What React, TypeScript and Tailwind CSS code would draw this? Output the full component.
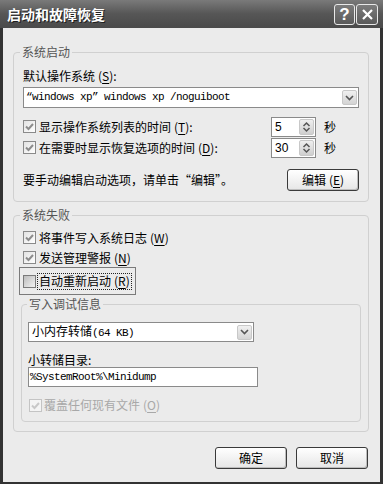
import React from "react";

const cjk = "font-['Noto_Sans_CJK_SC','Liberation_Sans',sans-serif]";
const mono = "font-['Liberation_Mono','Noto_Sans_CJK_SC',monospace]";

const Mn = ({ c }: { c: string }) => (
  <span className="ml-[3px]">
    (<span className="underline underline-offset-2">{c}</span>)
  </span>
);

const Check = ({ checked, disabled, hot }: { checked?: boolean; disabled?: boolean; hot?: boolean }) => (
  <span
    className={`flex h-[13px] w-[13px] shrink-0 items-center justify-center border ${
      disabled
        ? "border-[#c4c4c4] bg-[#f4f4f4]"
        : hot
        ? "border-[#7a7a7a] bg-linear-to-br from-[#bdbdbd] to-[#f2f2f2]"
        : "border-[#8a8a8a] bg-linear-to-br from-[#e2e2e2] to-white"
    }`}
  >
    {checked && (
      <svg width="11" height="11" viewBox="0 0 11 11">
        <path
          d="M2 5.5 L4.5 8 L9 3"
          fill="none"
          stroke={disabled ? "#c8c8c8" : "#8c8c8c"}
          strokeWidth="2"
        />
      </svg>
    )}
  </span>
);

const Arrow = () => (
  <span className="mr-[1px] ml-auto flex h-[15px] w-[15px] items-center justify-center rounded-[2px] border border-[#c8c8c8] bg-linear-to-b from-[#f0f0f0] to-[#d4d4d4]">
    <svg width="9" height="6" viewBox="0 0 9 6">
      <path d="M1 1 L4.5 4.5 L8 1" fill="none" stroke="#555" strokeWidth="1.6" />
    </svg>
  </span>
);

const Spin = ({ value }: { value: string }) => (
  <div className="flex h-[20px] w-[45px] items-center border border-[#8a8a8a] bg-white">
    <span className="pl-[3px] font-['Liberation_Sans',sans-serif] text-[12px] text-black">{value}</span>
    <span className="mr-[1px] ml-auto flex h-[16px] w-[15px] flex-col justify-between rounded-[2px] border border-[#c8c8c8] bg-linear-to-b from-[#efefef] to-[#cfcfcf] py-[1px]">
      <svg width="13" height="6" viewBox="0 0 13 6">
        <path d="M3.5 5 L6.5 2 L9.5 5" fill="none" stroke="#555" strokeWidth="1.5" />
      </svg>
      <svg width="13" height="6" viewBox="0 0 13 6">
        <path d="M3.5 1 L6.5 4 L9.5 1" fill="none" stroke="#555" strokeWidth="1.5" />
      </svg>
    </span>
  </div>
);

const Button = ({ children, w = "w-[72px]" }: { children: React.ReactNode; w?: string }) => (
  <button
    className={`flex h-[22px] ${w} items-center justify-center rounded-[3px] border border-[#3a3a3a] bg-linear-to-b from-white to-[#e6e6e6] text-[12px] text-black shadow-[inset_-1px_-1px_0_#bdbdbd]`}
  >
    {children}
  </button>
);

const Legend = ({ children, ml = "-ml-[3px]" }: { children: React.ReactNode; ml?: string }) => (
  <legend className={`${ml} px-[2px] text-[12px] leading-[14px] text-[#555]`}>{children}</legend>
);

export default function App() {
  return (
    <div className={`h-[486px] w-[383px] bg-white ${cjk}`}>
      <div className="flex h-[484px] flex-col">
        <div className="flex h-[28px] shrink-0 items-center bg-linear-to-b from-[#7a7a7a] via-[#565656] to-[#4a4a4a] pr-[5px] pl-[7px]">
          <span className="text-[14px] font-bold text-white [text-shadow:1px_1px_0_#1e1e1e]">启动和故障恢复</span>
          <div className="ml-auto flex gap-[1px]">
            <span className="flex h-[21px] w-[21px] items-center justify-center rounded-[3px] border border-[#e8e8e8] bg-linear-to-b from-[#7c7c7c] to-[#5a5a5a] font-['Liberation_Sans',sans-serif] text-[17px] font-bold leading-none text-white">
              ?
            </span>
            <span className="flex h-[21px] w-[22px] items-center justify-center rounded-[3px] border border-[#e8e8e8] bg-linear-to-b from-[#7c7c7c] to-[#5a5a5a]">
              <svg width="13" height="13" viewBox="0 0 13 13">
                <path d="M2 2 L11 11 M11 2 L2 11" stroke="white" strokeWidth="2.2" />
              </svg>
            </span>
          </div>
        </div>

        <div className="flex flex-1 flex-col border-x-[3px] border-b-2 border-[#333] bg-[#ebebeb] pt-[17px] pr-[11px] pl-[10px]">
          <fieldset className="rounded-[4px] border border-[#d0d0d0] px-[9px] pt-[9px] pb-[10px]">
            <Legend>系统启动</Legend>
            <div className="h-[16px] text-[12px] leading-[16px] text-black">
              默认操作系统<Mn c="S" />:
            </div>
            <div className="mt-[3px] flex h-[21px] items-center border border-[#8a8a8a] bg-white">
              <span className={`pl-[2px] ${mono} text-[11px] tracking-[-0.6px] text-black`}>
                “windows xp” windows xp /noguiboot
              </span>
              <Arrow />
            </div>
            <div className="mt-[8px] flex h-[21px] items-center text-[12px] text-black">
              <div className="flex flex-1 items-center gap-[3px]">
                <Check checked />
                <span>
                  显示操作系统列表的时间<Mn c="T" />:
                </span>
              </div>
              <Spin value="5" />
              <span className="w-[43px] pl-[8px]">秒</span>
            </div>
            <div className="flex h-[21px] items-center text-[12px] text-black">
              <div className="flex flex-1 items-center gap-[3px]">
                <Check checked />
                <span>
                  在需要时显示恢复选项的时间<Mn c="D" />:
                </span>
              </div>
              <Spin value="30" />
              <span className="w-[43px] pl-[8px]">秒</span>
            </div>
            <div className="mt-[11px] flex h-[22px] items-center justify-between text-[12px] text-black">
              <span>要手动编辑启动选项，请单击“编辑”。</span>
              <Button>
                编辑<Mn c="E" />
              </Button>
            </div>
          </fieldset>

          <fieldset className="mt-[6px] rounded-[4px] border border-[#d0d0d0] px-[9px] pt-[5px] pb-[9px] text-[12px] text-black">
            <Legend>系统失败</Legend>
            <div className="flex h-[21px] items-center gap-[3px]">
              <Check checked />
              <span>
                将事件写入系统日志<Mn c="W" />
              </span>
            </div>
            <div className="flex h-[19px] items-center gap-[3px]">
              <Check checked />
              <span>
                发送管理警报<Mn c="N" />
              </span>
            </div>
            <div className="-ml-[4px] flex h-[28px] w-[117px] items-center gap-[1px] border border-[#7a7a7a] pl-[3px]">
              <Check hot />
              <span className="flex h-[17px] items-center border border-dotted border-[#222] pr-[1px] pl-[1px]">
                自动重新启动<Mn c="R" />
              </span>
            </div>

            <fieldset className="-mx-[2px] mt-[2px] rounded-[4px] border border-[#d0d0d0] px-[6px] pt-[11px] pb-[8px]">
              <Legend ml="-ml-[1px]">写入调试信息</Legend>
              <div className="flex h-[20px] w-[226px] items-center border border-[#8a8a8a] bg-white">
                <span className="pl-[3px]">
                  小内存转储<span className={`${mono} text-[11px] tracking-[-0.6px]`}>(64 KB)</span>
                </span>
                <Arrow />
              </div>
              <div className="mt-[11px] h-[14px] leading-[14px]">小转储目录:</div>
              <div className="flex h-[20px] w-[230px] items-center border border-[#8a8a8a] bg-white">
                <span className={`pl-[1px] ${mono} text-[11px] tracking-[-0.6px]`}>%SystemRoot%\Minidump</span>
              </div>
              <div className="mt-[10px] flex h-[16px] items-center gap-[2px] pl-[1px] text-[#a8a8a8]">
                <Check checked disabled />
                <span>
                  覆盖任何现有文件<Mn c="O" />
                </span>
              </div>
            </fieldset>
          </fieldset>

          <div className="mt-[15px] flex justify-end gap-[9px] pr-[1px]">
            <Button>确定</Button>
            <Button>取消</Button>
          </div>
        </div>
      </div>
    </div>
  );
}
